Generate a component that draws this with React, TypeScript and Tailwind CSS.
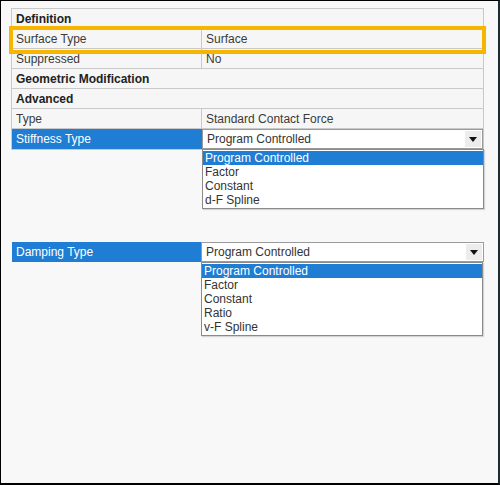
const font = "font-['Liberation_Sans',Arial,sans-serif]";

function Row({ label, value, bold, selected }: { label: string; value?: string; bold?: boolean; selected?: boolean }) {
  if (bold) {
    return (
      <div className="h-[20px] flex items-center border-b border-[#c9c9c9] px-[4px] font-bold text-[#222]">
        {label}
      </div>
    );
  }
  return (
    <div className="h-[20px] flex border-b border-[#c9c9c9]">
      <div
        className={
          "w-[190px] flex items-center px-[4px] border-r border-[#c9c9c9] " +
          (selected ? "bg-[#1f7dd4] text-white" : "text-[#3a3a3a]")
        }
      >
        {label}
      </div>
      <div className="flex-1 flex items-center px-[4px] text-[#3a3a3a]">{value}</div>
    </div>
  );
}

function Select({ value }: { value: string }) {
  return (
    <div className="flex-1 h-[20px] flex items-center bg-white border border-[#9a9a9a] pl-[4px] pr-[1px] text-[#333]">
      <span className="flex-1">{value}</span>
      <span className="w-[16px] h-[16px] bg-[#ececec] flex items-center justify-center">
        <svg width="8" height="5" viewBox="0 0 8 5">
          <path d="M0 0h8L4 5z" fill="#111" />
        </svg>
      </span>
    </div>
  );
}

function List({ items, left }: { items: string[]; left: string }) {
  return (
    <div className={"absolute top-[20px] w-[282px] bg-white border border-[#8a8a8a] py-[1px] shadow-[1px_1px_1px_rgba(0,0,0,0.15)] " + left}>
      {items.map((it, i) => (
        <div
          key={it}
          className={
            "h-[14px] leading-[14px] px-[2px] " +
            (i === 0 ? "bg-[#1f7dd4] text-white" : "text-[#333]")
          }
        >
          {it}
        </div>
      ))}
    </div>
  );
}

export default function App() {
  return (
    <div className={"relative w-[500px] h-[485px] bg-[#f8f8f8] border border-black border-r-2 border-r-[#1d2a30] border-b-2 text-[12px] " + font}>
      <div className="pl-[10px] pt-[7px] w-[483px]">
        <div className="border border-[#c9c9c9] bg-[#f6f6f6]">
          <Row label="Definition" bold />
          <Row label="Surface Type" value="Surface" />
          <Row label="Suppressed" value="No" />
          <Row label="Geometric Modification" bold />
          <Row label="Advanced" bold />
          <Row label="Type" value="Standard Contact Force" />
          <div className="relative h-[20px] flex">
            <div className="w-[190px] flex items-center px-[4px] bg-[#1f7dd4] text-white">Stiffness Type</div>
            <Select value="Program Controlled" />
            <List left="left-[190px]" items={["Program Controlled", "Factor", "Constant", "d-F Spline"]} />
          </div>
        </div>

        <div className="relative h-[20px] flex mt-[92px] w-[472px] ml-[1px]">
          <div className="w-[189px] flex items-center px-[4px] bg-[#1f7dd4] text-white">Damping Type</div>
          <Select value="Program Controlled" />
          <List left="left-[189px]" items={["Program Controlled", "Factor", "Constant", "Ratio", "v-F Spline"]} />
        </div>
      </div>

      <div className="absolute left-[8px] top-[25px] w-[477px] h-[28px] border-[4px] border-[#f7b500]" />
    </div>
  );
}
